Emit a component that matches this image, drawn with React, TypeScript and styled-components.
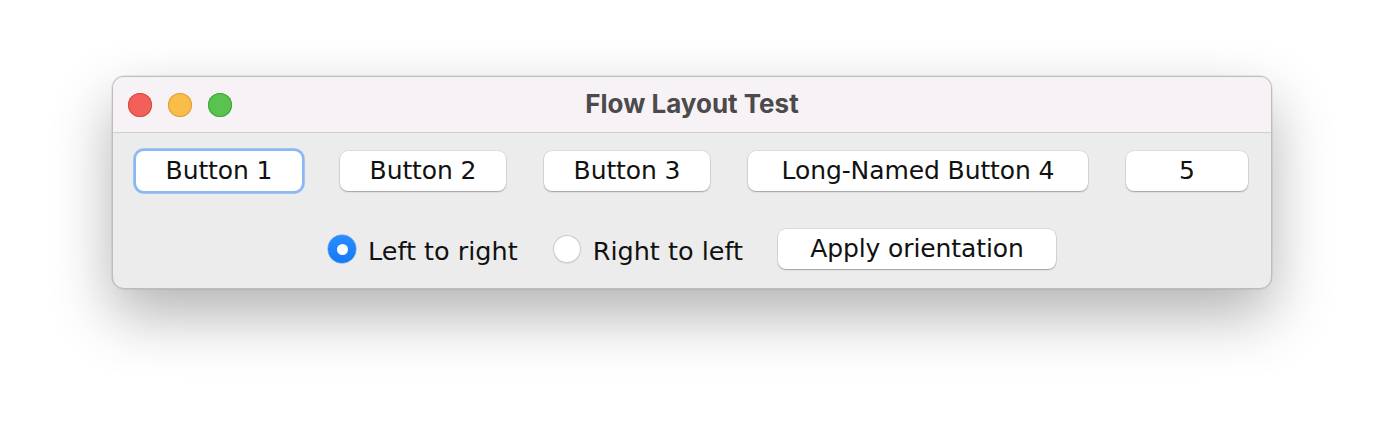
import * as React from "react";
import styled, { createGlobalStyle } from "styled-components";

const GlobalStyle = createGlobalStyle`
  html, body {
    margin: 0;
    padding: 0;
    background: #ffffff;
  }
`;

const Page = styled.div`
  width: 1384px;
  height: 436px;
  box-sizing: border-box;
  padding: 76px 0 0 112px;
`;

const Window = styled.div`
  width: 1160px;
  height: 213px;
  box-sizing: border-box;
  border-radius: 12px;
  background: #ececec;
  border: 1px solid #bdbdbd;
  box-shadow: 0 26px 60px rgba(0, 0, 0, 0.3), 0 0 0 0.5px rgba(0, 0, 0, 0.12);
  overflow: hidden;
  display: flex;
  flex-direction: column;
`;

const TitleBar = styled.div`
  height: 55px;
  flex: 0 0 auto;
  background: #f7f2f6;
  border-bottom: 1px solid #d2cfd2;
  display: grid;
  grid-template-columns: 1fr auto 1fr;
  align-items: center;
  padding: 0 15px;
`;

const Lights = styled.div`
  display: flex;
  gap: 16px;
`;

const Light = styled.span<{ fill: string; edge: string }>`
  width: 24px;
  height: 24px;
  border-radius: 50%;
  background: ${p => p.fill};
  box-shadow: inset 0 0 0 1px ${p => p.edge};
`;

const Title = styled.div`
  font-family: Inter, "Liberation Sans", sans-serif;
  font-weight: 700;
  font-size: 26px;
  color: #4c4a4c;
  padding-bottom: 3px;
`;

const Content = styled.div`
  flex: 1;
  display: flex;
  flex-direction: column;
  align-items: center;
  padding-top: 18px;
  gap: 38px;
`;

const Row = styled.div<{ gap: number }>`
  display: flex;
  justify-content: center;
  align-items: center;
  gap: ${p => p.gap}px;
`;

const PushButton = styled.button<{ w: number; focused?: boolean }>`
  width: ${p => p.w}px;
  height: 40px;
  box-sizing: border-box;
  border-radius: 8px;
  border: none;
  background: #ffffff;
  font-family: "DejaVu Sans", "Open Sans", sans-serif;
  font-size: 25px;
  letter-spacing: -0.1px;
  color: #111;
  padding: 0 0 2px;
  white-space: nowrap;
  box-shadow: ${p =>
    p.focused
      ? "0 0 0 2.5px #8ab8f2, 0 0 0 3px rgba(120,170,240,0.4)"
      : "0 1px 1.5px rgba(0,0,0,0.28), 0 0 0 0.5px rgba(0,0,0,0.12)"};
`;

const RadioItem = styled.label`
  display: flex;
  align-items: center;
  gap: 12px;
  font-family: "DejaVu Sans", "Open Sans", sans-serif;
  font-size: 25.5px;
  color: #111;
  white-space: nowrap;
`;

const RadioDot = styled.span<{ checked?: boolean }>`
  width: 28px;
  height: 28px;
  box-sizing: border-box;
  border-radius: 50%;
  display: flex;
  align-items: center;
  justify-content: center;
  background: ${p => (p.checked ? "linear-gradient(#2a8cff, #1479f5)" : "#ffffff")};
  box-shadow: ${p =>
    p.checked
      ? "0 0 0 0.5px rgba(0,90,220,0.6)"
      : "inset 0 0 0 1px #c9c9c9, 0 0.5px 1px rgba(0,0,0,0.15)"};

  &::after {
    content: "";
    display: ${p => (p.checked ? "block" : "none")};
    width: 11px;
    height: 11px;
    border-radius: 50%;
    background: #ffffff;
  }
`;

const RadioText = styled.span`
  padding-top: 3px;
`;

const buttons = [
  { label: "Button 1", w: 166, focused: true },
  { label: "Button 2", w: 166 },
  { label: "Button 3", w: 166 },
  { label: "Long-Named Button 4", w: 340 },
  { label: "5", w: 122 }
];

const App: React.FC = () => (
  <>
    <GlobalStyle />
    <Page>
      <Window>
        <TitleBar>
          <Lights>
            <Light fill="#f2605a" edge="#d9493f" />
            <Light fill="#fbbd4a" edge="#dea034" />
            <Light fill="#5ac24f" edge="#3fa63a" />
          </Lights>
          <Title>Flow Layout Test</Title>
          <span />
        </TitleBar>
        <Content>
          <Row gap={38}>
            {buttons.map(b => (
              <PushButton key={b.label} w={b.w} focused={b.focused}>
                {b.label}
              </PushButton>
            ))}
          </Row>
          <Row gap={35}>
            <RadioItem>
              <RadioDot checked />
              <RadioText>Left to right</RadioText>
            </RadioItem>
            <RadioItem>
              <RadioDot />
              <RadioText>Right to left</RadioText>
            </RadioItem>
            <PushButton w={278}>Apply orientation</PushButton>
          </Row>
        </Content>
      </Window>
    </Page>
  </>
);

export default App;
